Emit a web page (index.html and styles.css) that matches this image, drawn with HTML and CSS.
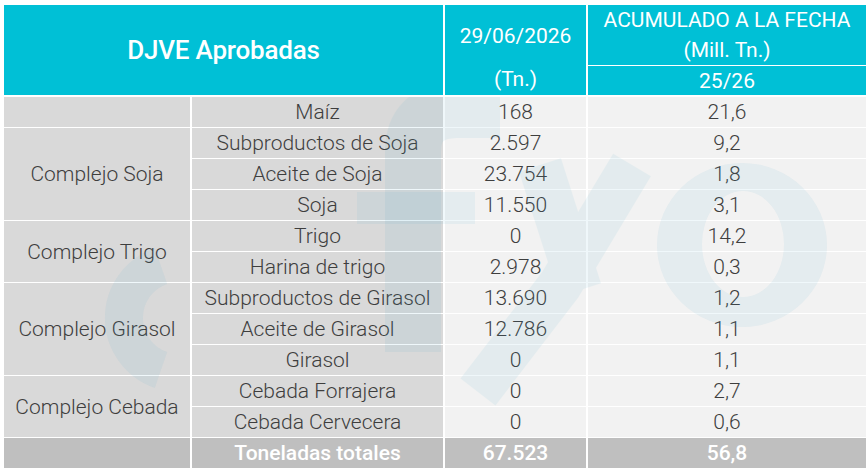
FILE: index.html
```html
<!DOCTYPE html>
<html lang="es">
<head>
<meta charset="utf-8">
<title>DJVE Aprobadas</title>
<link rel="stylesheet" href="styles.css">
</head>
<body>
<div class="table">
  <div class="head">
    <div class="h-title">DJVE Aprobadas</div>
    <div class="h-date"><span>29/06/2026</span><span>(Tn.)</span></div>
    <div class="h-acc">ACUMULADO A LA FECHA<br>(Mill. Tn.)</div>
    <div class="h-season">25/26</div>
  </div>
  <div class="body">
    <div class="g"></div><div class="p">Maíz</div><div class="n">168</div><div class="v">21,6</div>
    <div class="g span3">Complejo Soja</div><div class="p">Subproductos de Soja</div><div class="n">2.597</div><div class="v">9,2</div>
    <div class="p">Aceite de Soja</div><div class="n">23.754</div><div class="v">1,8</div>
    <div class="p">Soja</div><div class="n">11.550</div><div class="v">3,1</div>
    <div class="g span2">Complejo Trigo</div><div class="p">Trigo</div><div class="n">0</div><div class="v">14,2</div>
    <div class="p">Harina de trigo</div><div class="n">2.978</div><div class="v">0,3</div>
    <div class="g span3">Complejo Girasol</div><div class="p">Subproductos de Girasol</div><div class="n">13.690</div><div class="v">1,2</div>
    <div class="p">Aceite de Girasol</div><div class="n">12.786</div><div class="v">1,1</div>
    <div class="p">Girasol</div><div class="n">0</div><div class="v">1,1</div>
    <div class="g span2">Complejo Cebada</div><div class="p">Cebada Forrajera</div><div class="n">0</div><div class="v">2,7</div>
    <div class="p">Cebada Cervecera</div><div class="n">0</div><div class="v">0,6</div>
    <div class="t"></div><div class="t">Toneladas totales</div><div class="t">67.523</div><div class="t">56,8</div>
    <svg class="watermark" viewBox="4 97 862 371" preserveAspectRatio="none" aria-hidden="true">
      <g fill="none" stroke="#40a8c8" opacity="0.08">
        <path d="M 161 266 A 55 55 0 0 0 161 370" stroke-width="38" />
        <path d="M 413 352 L 413 152 Q 413 112 455 110 L 500 110" stroke-width="56" />
        <path d="M 632 165 L 560 285 L 478 392" stroke-width="44" />
        <path d="M 540 165 L 580 290" stroke-width="44" />
      </g>
      <g fill="#40a8c8" opacity="0.08">
        <rect x="357" y="192" width="118" height="32" />
        <path fill-rule="evenodd" d="M 657 245 A 85 82 0 1 0 827 245 A 85 82 0 1 0 657 245 Z M 702 244 A 41 53 0 1 0 784 244 A 41 53 0 1 0 702 244 Z" />
      </g>
    </svg>
  </div>
</div>
</body>
</html>
```

FILE: styles.css
```css
html, body {
  margin: 0;
  padding: 0;
  background: #ffffff;
}

body {
  font-family: Roboto, "Liberation Sans", sans-serif;
}

.table {
  width: 862px;
  padding: 5px 0 0 4px;
}

.head,
.body {
  display: grid;
  grid-template-columns: 186px 251px 141px 278px;
  column-gap: 2px;
}

.head {
  grid-template-rows: 60px 29px;
  row-gap: 1px;
  color: #ffffff;
}

.head > div {
  background: #00c0d6;
  display: flex;
  align-items: center;
  justify-content: center;
  text-align: center;
}

.h-title {
  grid-column: 1 / 3;
  grid-row: 1 / 3;
  font-size: 26px;
  font-weight: 500;
  letter-spacing: -0.2px;
}

.head > .h-date {
  grid-column: 3;
  grid-row: 1 / 3;
  flex-direction: column;
  justify-content: flex-start;
  padding-top: 19px;
  gap: 19px;
  font-size: 21px;
  line-height: 24px;
}

.h-acc {
  grid-column: 4;
  grid-row: 1;
  font-size: 21px;
  line-height: 30px;
}

.h-season {
  grid-column: 4;
  grid-row: 2;
  font-size: 21px;
}

.body {
  position: relative;
  margin-top: 2px;
  grid-template-rows: repeat(12, 30px);
  row-gap: 1px;
  font-size: 21px;
  font-weight: 300;
  color: #3e3e3e;
}

.body > div {
  display: flex;
  align-items: center;
  justify-content: center;
  white-space: nowrap;
}

.g,
.p {
  background: #d9d9d9;
}

.n,
.v {
  background: #f2f2f2;
}

.span2 {
  grid-row: span 2;
}

.span3 {
  grid-row: span 3;
}

.body > .t {
  background: #bfbfbf;
  color: #ffffff;
  font-weight: 500;
  font-size: 21px;
}

.watermark {
  position: absolute;
  left: 0;
  top: 0;
  width: 100%;
  height: 100%;
  pointer-events: none;
}
```
